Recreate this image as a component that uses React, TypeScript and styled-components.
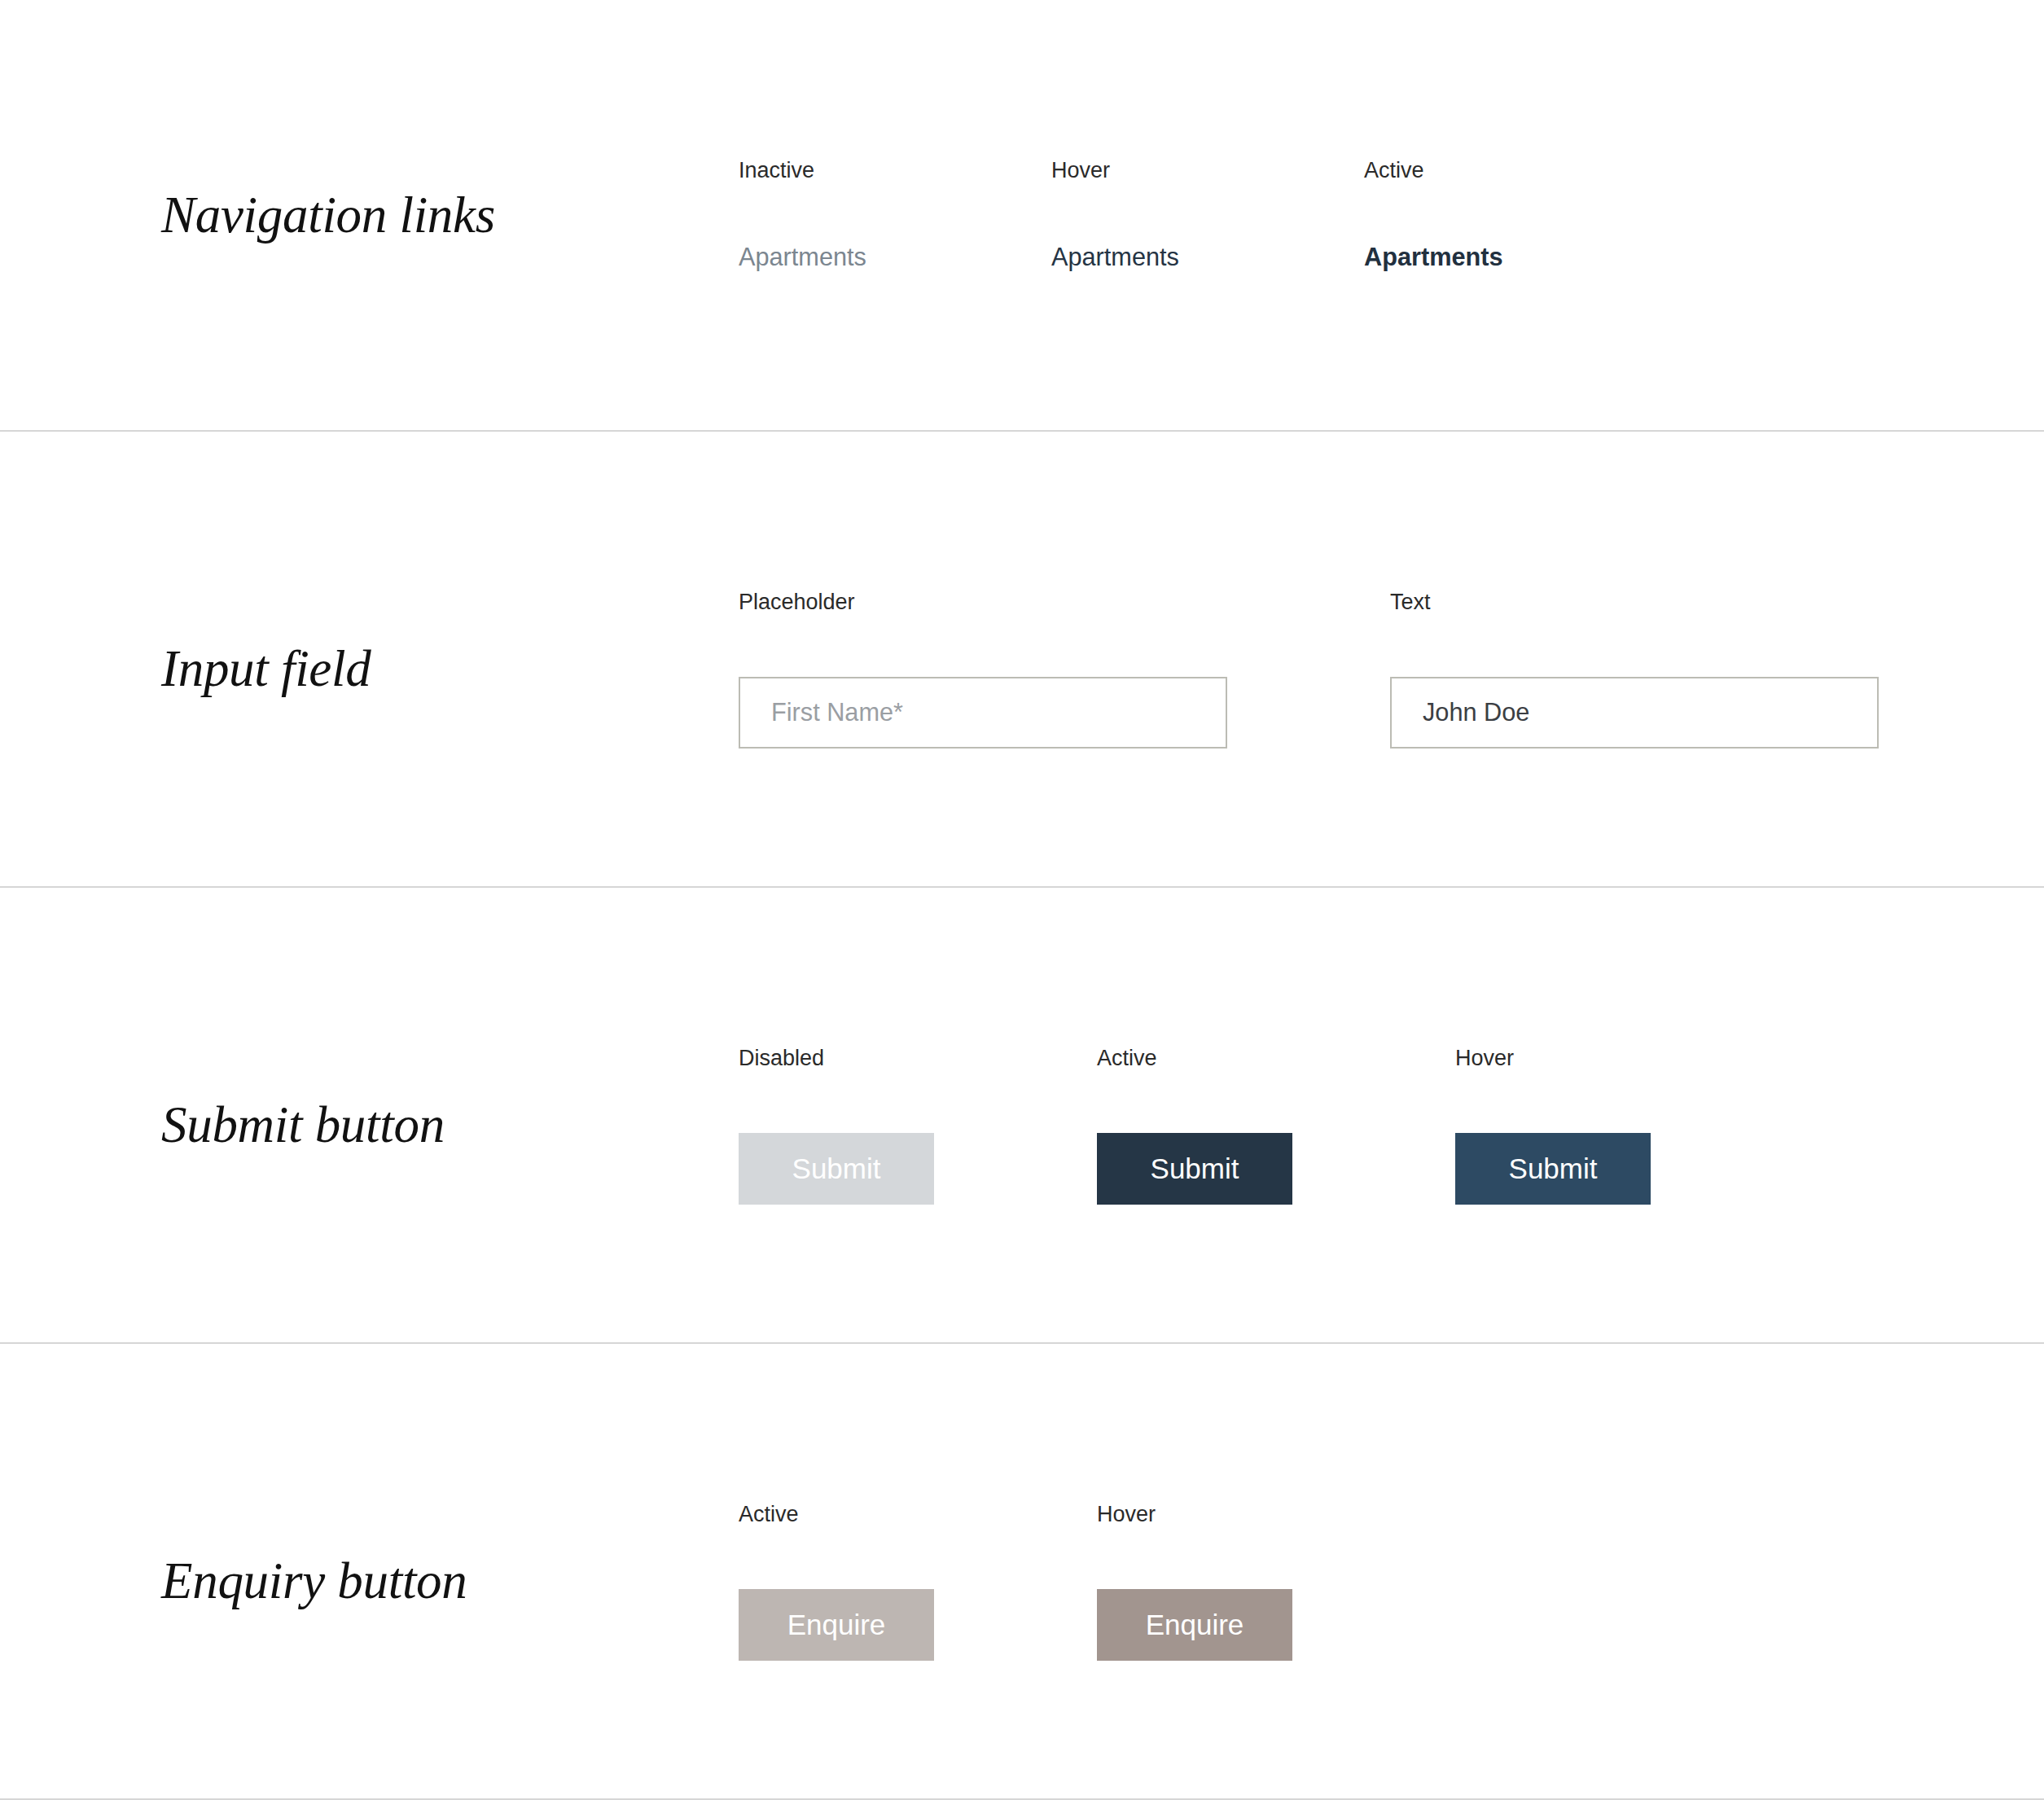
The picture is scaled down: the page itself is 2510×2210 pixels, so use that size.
import React from 'react';
import styled, { createGlobalStyle } from 'styled-components';

const GlobalStyle = createGlobalStyle`
  html, body {
    margin: 0;
    padding: 0;
    background: #ffffff;
  }

  * {
    box-sizing: border-box;
  }
`;

type Swatch = { label: string; bg: string; text: string };

const submitButtons: Swatch[] = [
  { label: 'Disabled', bg: '#d4d7da', text: 'Submit' },
  { label: 'Active', bg: '#253646', text: 'Submit' },
  { label: 'Hover', bg: '#2d4a63', text: 'Submit' },
];

const enquiryButtons: Swatch[] = [
  { label: 'Active', bg: '#bdb6b2', text: 'Enquire' },
  { label: 'Hover', bg: '#a2958f', text: 'Enquire' },
];

export default function App() {
  return (
    <>
      <GlobalStyle />
      <Page>
        <Section $height={530}>
          <Inner>
            <Title>Navigation links</Title>
            <Columns $col={184}>
              <Cell $gap={73}>
                <Label>Inactive</Label>
                <NavLink $state="inactive">Apartments</NavLink>
              </Cell>
              <Cell $gap={73}>
                <Label>Hover</Label>
                <NavLink $state="hover">Apartments</NavLink>
              </Cell>
              <Cell $gap={73}>
                <Label>Active</Label>
                <NavLink $state="active">Apartments</NavLink>
              </Cell>
            </Columns>
          </Inner>
        </Section>

        <Section $height={560}>
          <Inner>
            <Title>Input field</Title>
            <Columns $col={600}>
              <Cell>
                <Label>Placeholder</Label>
                <TextInput placeholder="First Name*" readOnly />
              </Cell>
              <Cell>
                <Label>Text</Label>
                <TextInput value="John Doe" readOnly />
              </Cell>
            </Columns>
          </Inner>
        </Section>

        <Section $height={560}>
          <Inner>
            <Title>Submit button</Title>
            <Columns $col={240}>
              {submitButtons.map((b) => (
                <Cell key={b.label}>
                  <Label>{b.label}</Label>
                  <Button $bg={b.bg}>{b.text}</Button>
                </Cell>
              ))}
            </Columns>
          </Inner>
        </Section>

        <Section $height={560}>
          <Inner>
            <Title>Enquiry button</Title>
            <Columns $col={240}>
              {enquiryButtons.map((b) => (
                <Cell key={b.label}>
                  <Label>{b.label}</Label>
                  <Button $bg={b.bg}>{b.text}</Button>
                </Cell>
              ))}
            </Columns>
          </Inner>
        </Section>
      </Page>
    </>
  );
}

const Page = styled.main`
  width: 2510px;
  display: flex;
  flex-direction: column;
`;

const Section = styled.section<{ $height: number }>`
  height: ${({ $height }) => `${$height}px`};
  padding: 194px 0 0 198px;
  border-bottom: 2px solid #d6d6d6;
`;

const Inner = styled.div`
  display: grid;
  grid-template-columns: 709px 1fr;
  align-items: center;
`;

const Title = styled.h2`
  margin: 0;
  font-family: 'Liberation Serif', 'Times New Roman', serif;
  font-style: italic;
  font-weight: 400;
  font-size: 63px;
  letter-spacing: -0.3px;
  color: #111111;
`;

const Columns = styled.div<{ $col: number }>`
  display: grid;
  grid-auto-flow: column;
  grid-auto-columns: ${({ $col }) => `${$col}px`};
  justify-content: start;
  column-gap: 200px;
`;

const Cell = styled.div<{ $gap?: number }>`
  display: flex;
  flex-direction: column;
  gap: ${({ $gap = 76 }) => `${$gap}px`};
`;

const Label = styled.span`
  font-family: 'Liberation Sans', Arial, sans-serif;
  font-size: 27px;
  color: #2a2a2a;
  white-space: nowrap;
`;

const NAV_COLORS = {
  inactive: '#7b8690',
  hover: '#253444',
  active: '#22303f',
};

const NavLink = styled.a<{ $state: 'inactive' | 'hover' | 'active' }>`
  font-family: 'Liberation Sans', Arial, sans-serif;
  font-size: 30.7px;
  font-weight: ${({ $state }) => ($state === 'active' ? 700 : 400)};
  color: ${({ $state }) => NAV_COLORS[$state]};
  white-space: nowrap;
  text-decoration: none;
`;

const TextInput = styled.input`
  width: 600px;
  height: 88px;
  padding: 0 38px;
  border: 2px solid #bcbcb4;
  border-radius: 0;
  outline: none;
  background: #ffffff;
  font-family: 'Liberation Sans', Arial, sans-serif;
  font-size: 30.7px;
  color: #3b3e43;

  &::placeholder {
    color: #9a9ea3;
  }
`;

const Button = styled.button<{ $bg: string }>`
  width: 240px;
  height: 88px;
  padding: 0;
  border: none;
  border-radius: 0;
  background: ${({ $bg }) => $bg};
  font-family: 'Liberation Sans', Arial, sans-serif;
  font-size: 35px;
  color: #ffffff;
  cursor: pointer;
`;
